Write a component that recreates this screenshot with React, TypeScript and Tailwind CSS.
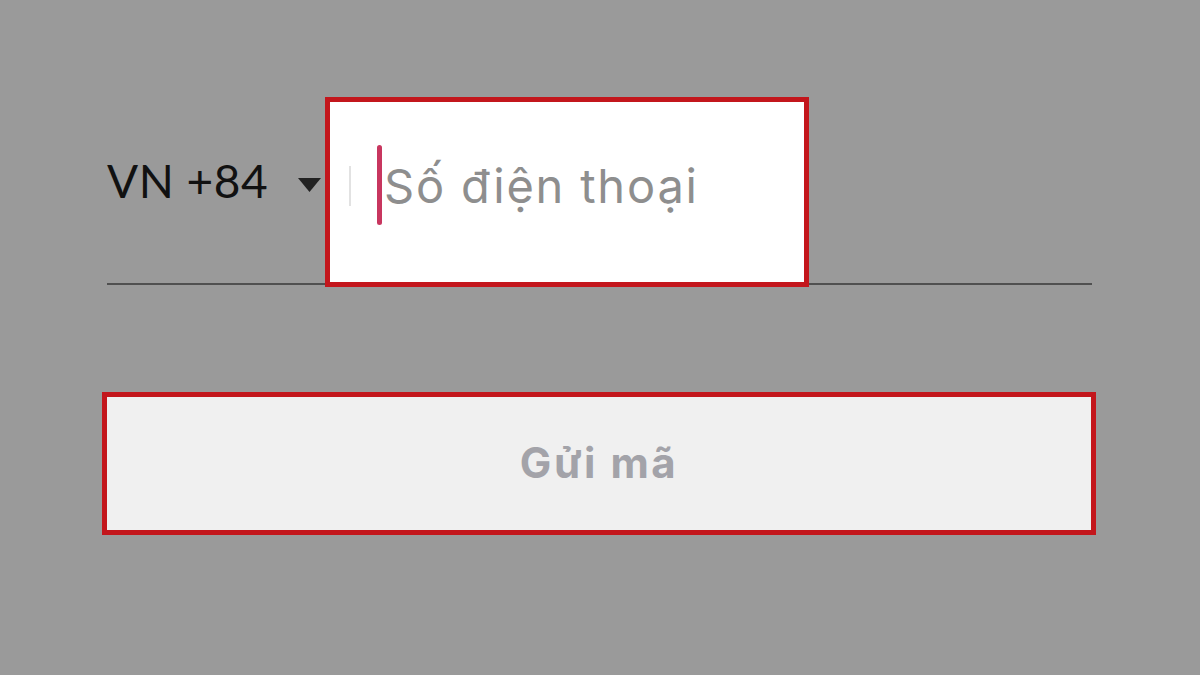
import React from "react";

export default function App() {
  const lato = { fontFamily: '"Lato", "Noto Sans", sans-serif' };
  const inter = { fontFamily: '"Inter", "Noto Sans", sans-serif' };
  return (
    <div className="w-[1200px] h-[675px] bg-[#9a9a9a] overflow-hidden flex flex-col">
      <div className="ml-[107px] mr-[108px] mt-[97px] h-[188px] flex items-center border-b-2 border-[#505050]">
        <span className="text-[46px] leading-none text-[#111] tracking-[0.5px] -mt-[18px]" style={lato}>VN +84</span>
        <svg className="ml-[30px] -mt-[10px]" width="23" height="14" viewBox="0 0 23 14">
          <polygon points="0,0 23,0 11.5,14" fill="#222" />
        </svg>
        <div className="ml-[4px] self-stretch -mb-[4px] w-[484px] border-[5px] border-[#c3161c] bg-white flex items-center relative">
          <div className="ml-[19px] w-[2px] h-[40px] bg-[#e2e2e2] -mt-[12px]" />
          <div className="ml-[26px] w-[5px] h-[80px] rounded-full bg-[#c8365f] -mt-[14px]" />
          <span className="ml-[2px] text-[47px] leading-none tracking-[1.8px] text-[#8e8e8e] -mt-[14px]" style={inter}>Số điện thoại</span>
        </div>
      </div>
      <div className="ml-[102px] mt-[107px] w-[994px] h-[143px] border-[5px] border-[#c3161c] bg-[#f0f0f0] flex items-center justify-center">
        <span className="text-[42px] font-bold leading-none tracking-[2.5px] text-[#a3a3a9] mb-[2px]" style={inter}>Gửi mã</span>
      </div>
    </div>
  );
}
